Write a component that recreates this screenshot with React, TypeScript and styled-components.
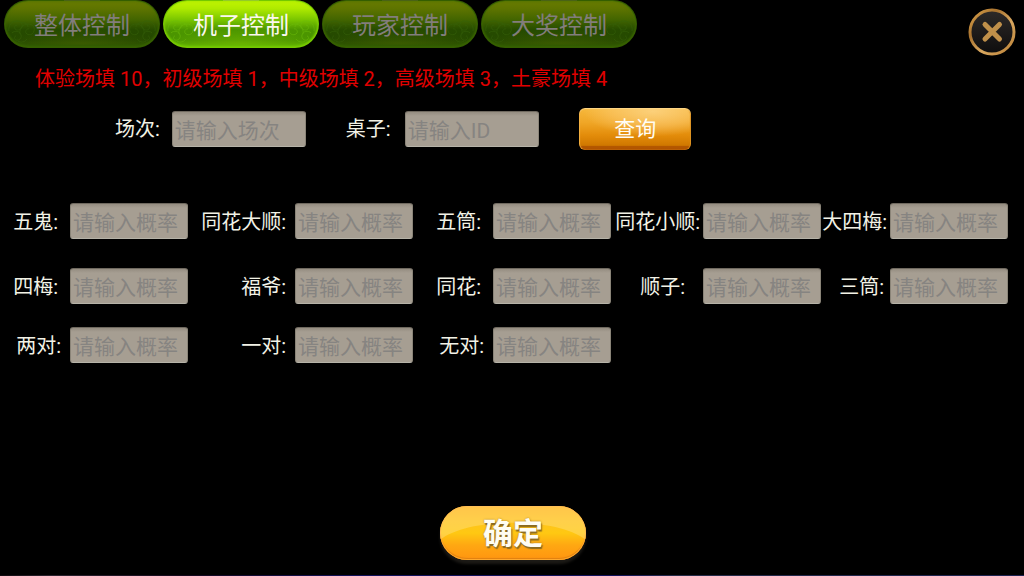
import React, { useState } from 'react';
import styled, { createGlobalStyle, css } from 'styled-components';

const GlobalStyle = createGlobalStyle`
  * { box-sizing: border-box; }
  body {
    margin: 0;
    background: #000;
    color: #f2f2e6;
    font-family: Roboto, 'Noto Sans CJK SC', sans-serif;
    font-size: 20px;
    line-height: 24px;
  }
  button, input { font-family: inherit; }
`;

const Page = styled.main`
  display: flex;
  flex-direction: column;
  min-height: 100vh;
`;

const Header = styled.header`
  display: flex;
  justify-content: space-between;
  align-items: flex-start;
  padding: 0 8px 0 4px;
`;

const TabList = styled.div`
  display: flex;
  gap: 3px;
`;

const TabButton = styled.button<{ $active: boolean }>`
  display: grid;
  place-items: center;
  width: 156px;
  height: 48px;
  padding: 4px 0 0;
  border: 0;
  border-radius: 24px;
  cursor: pointer;
  font-size: 24px;
  line-height: 32px;
  ${({ $active }) =>
    $active
      ? css`
          color: #fbf7ee;
          background:
            radial-gradient(ellipse 50% 30% at 50% 92%, rgba(120, 190, 0, 0.6), transparent),
            linear-gradient(#c4f600 0, #aeea00 18%, #78c400 42%, #4c9600 62%, #4a9400 84%, #62b000 100%);
          box-shadow: inset 0 0 0 1px #74c800, inset 0 0 3px 1px #96e000, inset 0 -3px 2px #5cb400;
        `
      : css`
          color: #827d7c;
          background:
            radial-gradient(ellipse 50% 30% at 50% 92%, rgba(70, 100, 0, 0.6), transparent),
            linear-gradient(#6a7c00 0, #5e7400 18%, #416400 42%, #264b00 62%, #254900 84%, #315800 100%);
          box-shadow: inset 0 0 0 1px #345e00, inset 0 0 3px 1px #466e00, inset 0 -3px 2px #2d5800;
        `}

  > * { grid-area: 1 / 1; }
`;

const TabArt = styled.svg<{ $active: boolean }>`
  width: 156px;
  height: 48px;
  margin-top: -4px;
  fill: none;
  stroke: ${({ $active }) => ($active ? '#6cbc0a' : '#37620a')};
  stroke-width: 1;
  opacity: 0.6;
`;

const CloseButton = styled.button`
  width: 48px;
  height: 48px;
  margin-top: 8px;
  padding: 0;
  border: 0;
  background: none;
  cursor: pointer;

  svg { display: block; }
`;

const Notice = styled.p`
  margin: 11px 0 0;
  padding: 0 35px;
  color: #e00000;
`;

const SearchForm = styled.form`
  display: flex;
  align-items: center;
  gap: 40px;
  margin-top: 17px;
  padding-left: 115px;
`;

const Field = styled.div<{ $gap: number }>`
  display: flex;
  justify-content: flex-end;
  align-items: center;
  gap: ${({ $gap }) => $gap}px;
`;

const Label = styled.label`
  white-space: nowrap;
`;

const OddsLabel = styled(Label)`
  padding-top: 2px;
`;

const TextInput = styled.input<{ $wide?: boolean }>`
  flex: none;
  width: ${({ $wide }) => ($wide ? 134 : 118)}px;
  height: 36px;
  padding: ${({ $wide }) => ($wide ? 4 : 3)}px 2px 0;
  border: 1px solid;
  border-color: #6f695f #8a8478 #b6b3a8;
  border-radius: 3px;
  outline: 0;
  background: linear-gradient(#958d81 0, #a69e92 4px, #a69e92 100%);
  color: #33302b;
  font-size: 21px;

  &::placeholder { color: #868481; opacity: 1; }
`;

const QueryButton = styled.button`
  width: 112px;
  height: 42px;
  padding: 0 0 0 1px;
  border: 0;
  border-radius: 6px;
  cursor: pointer;
  color: #fffdf5;
  font-size: 21px;
  line-height: 24px;
  background:
    radial-gradient(ellipse 62% 60% at 66% 8%, rgba(255, 220, 150, 0.7), rgba(255, 210, 130, 0.4) 60%, transparent),
    linear-gradient(#f6b83c 0, #f0a626 35%, #e38c0a 65%, #d07800 89%, #b45800 91%, #b05200 100%);
  box-shadow: inset 0 1px 1px #ffd98a, inset 1px 0 1px #f2ac3c, inset -1px 0 1px #d98a18;
`;

const OddsForm = styled.form`
  flex: 1;
  display: flex;
  flex-direction: column;
  align-items: center;
  margin-top: 53px;
`;

const OddsGrid = styled.div`
  display: flex;
  flex-direction: column;
  align-self: stretch;
  padding-right: 16px;
`;

const OddsRow = styled.div<{ $space: number }>`
  display: grid;
  grid-template-columns: 188fr 225fr 198fr 210fr 187fr;
  margin-top: ${({ $space }) => $space}px;
`;

const ConfirmButton = styled.button`
  position: relative;
  overflow: hidden;
  width: 146px;
  height: 54px;
  margin: auto 0 15px 2px;
  padding: 2px 0 0;
  border: 0;
  border-radius: 27px;
  cursor: pointer;
  color: #fffdf2;
  font-size: 30px;
  font-weight: 700;
  line-height: 40px;
  text-shadow: 1px 2px 1px #8a6a20, 0 0 2px #a87c20;
  background: linear-gradient(#ffb21c 0, #ffc41c 30%, #ffc812 50%, #ffa812 72%, #ff9410 100%);
  box-shadow: inset 0 0 0 1px #ffa92e, inset 0 -2px 1px #e08010, 0 4px 3px #1c1a16;

  span { position: relative; }
`;

const ConfirmGloss = styled.svg`
  position: absolute;
  inset: 0;
  width: 100%;
  height: 100%;
`;

const BottomStrip = styled.div`
  height: 1px;
  background: linear-gradient(90deg, #100a10, #2c2430 5%, #14081c 18%, #11115a 35%, #11115a 60%, #262c48 66%, #1c2250 100%);
`;

const tabs = ['整体控制', '机子控制', '玩家控制', '大奖控制'];

type Odds = { id: string; label: string; gap: number };

const oddsRows: { space: number; fields: Odds[] }[] = [
  {
    space: 0,
    fields: [
      { id: 'five-ghosts', label: '五鬼:', gap: 12 },
      { id: 'royal-flush', label: '同花大顺:', gap: 9 },
      { id: 'five-kind', label: '五筒:', gap: 12 },
      { id: 'straight-flush', label: '同花小顺:', gap: 3 },
      { id: 'big-four', label: '大四梅:', gap: 3 },
    ],
  },
  {
    space: 29,
    fields: [
      { id: 'four-kind', label: '四梅:', gap: 12 },
      { id: 'full-house', label: '福爷:', gap: 9 },
      { id: 'flush', label: '同花:', gap: 12 },
      { id: 'straight', label: '顺子:', gap: 18 },
      { id: 'three-kind', label: '三筒:', gap: 6 },
    ],
  },
  {
    space: 23,
    fields: [
      { id: 'two-pair', label: '两对:', gap: 9 },
      { id: 'one-pair', label: '一对:', gap: 9 },
      { id: 'no-pair', label: '无对:', gap: 9 },
    ],
  },
];

const cloud =
  'M5 31c-1-6 3-10 8-10 4 0 6 3 5 6-1 3-5 4-7 2-1-2 0-4 2-4M17 23c4-1 7 1 7 4M16 34c-1-6 3-10 8-10 5 0 7 4 6 7-1 4-6 5-8 2-1-2 1-5 3-4M8 33c3-3 8-2 9 2 1 3-2 6-5 5-2-1-2-4 0-4M14 41c3 2 7 1 9-2';

function TabDecoration({ active }: { active: boolean }) {
  return (
    <TabArt $active={active} viewBox="0 0 156 48" aria-hidden="true">
      <path d={cloud} />
      <path d={cloud} transform="translate(156 0) scale(-1 1)" />
      <path d="M60 0h36" stroke={active ? '#dccf8c' : '#7c6c4c'} />
    </TabArt>
  );
}

export default function App() {
  const [current, setCurrent] = useState(1);

  return (
    <>
      <GlobalStyle />
      <Page>
        <Header>
          <TabList role="tablist">
            {tabs.map((name, i) => (
              <TabButton
                key={name}
                type="button"
                role="tab"
                aria-selected={i === current}
                $active={i === current}
                onClick={() => setCurrent(i)}
              >
                <TabDecoration active={i === current} />
                <span>{name}</span>
              </TabButton>
            ))}
          </TabList>
          <CloseButton type="button" aria-label="关闭">
            <svg width="48" height="48" viewBox="0 0 48 48">
              <defs>
                <linearGradient id="ring" x1="0" y1="0" x2="1" y2="1">
                  <stop offset="0" stopColor="#e0a850" />
                  <stop offset="0.3" stopColor="#a8722e" />
                  <stop offset="0.6" stopColor="#d9a860" />
                  <stop offset="1" stopColor="#b97f34" />
                </linearGradient>
                <linearGradient id="disc" x1="0" y1="0" x2="0" y2="1">
                  <stop offset="0" stopColor="#2e2a28" />
                  <stop offset="1" stopColor="#0e0d0d" />
                </linearGradient>
              </defs>
              <circle cx="24" cy="24" r="22" fill="url(#disc)" stroke="url(#ring)" strokeWidth="3" />
              <path d="M17 16.500L31.500 31M31.500 16.500L17 31" stroke="#c0904a" strokeWidth="5" strokeLinecap="round" />
            </svg>
          </CloseButton>
        </Header>

        <Notice>体验场填 10，初级场填 1，中级场填 2，高级场填 3，土豪场填 4</Notice>

        <SearchForm onSubmit={(e) => e.preventDefault()}>
          <Field $gap={12}>
            <Label htmlFor="round">场次:</Label>
            <TextInput id="round" $wide placeholder="请输入场次" />
          </Field>
          <Field $gap={14}>
            <Label htmlFor="table">桌子:</Label>
            <TextInput id="table" $wide placeholder="请输入ID" />
          </Field>
          <QueryButton type="submit">查询</QueryButton>
        </SearchForm>

        <OddsForm onSubmit={(e) => e.preventDefault()}>
          <OddsGrid>
            {oddsRows.map((row) => (
              <OddsRow key={row.fields[0].id} $space={row.space}>
                {row.fields.map((f) => (
                  <Field key={f.id} $gap={f.gap}>
                    <OddsLabel htmlFor={f.id}>{f.label}</OddsLabel>
                    <TextInput id={f.id} placeholder="请输入概率" />
                  </Field>
                ))}
              </OddsRow>
            ))}
          </OddsGrid>
          <ConfirmButton type="submit">
            <ConfirmGloss viewBox="0 0 146 54" preserveAspectRatio="none" aria-hidden="true">
              <path d="M0 34C28 11 118 11 146 34V0H0Z" fill="#ffe9a0" opacity="0.35" />
            </ConfirmGloss>
            <span>确定</span>
          </ConfirmButton>
        </OddsForm>
        <BottomStrip />
      </Page>
    </>
  );
}
